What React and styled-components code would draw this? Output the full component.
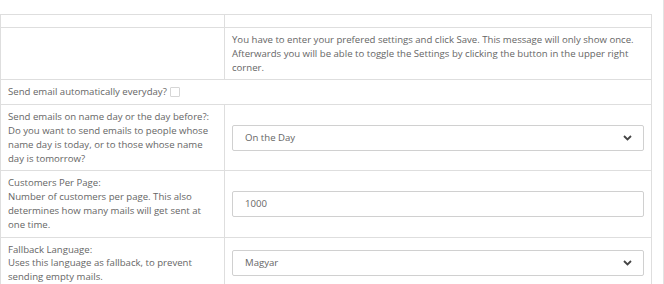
import React from 'react';
import styled, { createGlobalStyle } from 'styled-components';

const GlobalStyle = createGlobalStyle`
    html, body {
        margin: 0;
        padding: 0;
        background: #fff;
    }
    body {
        font-family: "Open Sans", "Liberation Sans", sans-serif;
        font-size: 9.6px;
        color: #666;
    }
`;

const Page = styled.div`
    width: 664px;
    height: 284px;
    box-sizing: border-box;
    padding: 14px 12px 0 0;
    border-right: 1px solid #e3e3e3;
    overflow: hidden;
`;

const SettingsTable = styled.table`
    width: 652px;
    border-collapse: collapse;
    table-layout: fixed;
`;

const Row = styled.tr`
    height: ${p => (p.$height ? `${p.$height}px` : 'auto')};
`;

const Cell = styled.td`
    border: 1px solid #dedede;
    padding: ${p => (p.$empty ? '0' : '5px 7px')};
    line-height: 13.8px;
    vertical-align: middle;
    width: ${p => (p.$width ? `${p.$width}px` : 'auto')};
    box-sizing: border-box;
`;

const Label = styled.span`
    display: block;
`;

const Checkbox = styled.span`
    display: inline-block;
    width: 8px;
    height: 8px;
    border: 1px solid #d6d6d6;
    border-radius: 1px;
    vertical-align: middle;
    margin: -1px 0 0 1px;
`;

const Field = styled.div`
    height: 26px;
    box-sizing: border-box;
    border: 1px solid #d0d0d0;
    border-radius: 2px;
    padding: 0 12px;
    display: flex;
    align-items: center;
    justify-content: space-between;
    color: #666;
    background: #fff;
`;

const Chevron = () => (
    <svg width="9" height="6" viewBox="0 0 9 6" style={{ marginRight: -1 }}>
        <path d="M1 1 L4.5 4.5 L8 1" fill="none" stroke="#444" strokeWidth="1.8" />
    </svg>
);

const Select = ({ value }) => (
    <Field>
        <span>{value}</span>
        <Chevron />
    </Field>
);

const App = () => (
    <>
        <GlobalStyle />
        <Page>
            <SettingsTable>
                <tbody>
                    <Row $height={13}>
                        <Cell $width={224} $empty />
                        <Cell $empty />
                    </Row>
                    <Row>
                        <Cell />
                        <Cell>
                            You have to enter your prefered settings and click Save. This message will only show once.
                            Afterwards you will be able to toggle the Settings by clicking the button in the upper right corner.
                        </Cell>
                    </Row>
                    <Row>
                        <Cell colSpan={2}>
                            Send email automatically everyday? <Checkbox />
                        </Cell>
                    </Row>
                    <Row>
                        <Cell>
                            <Label>Send emails on name day or the day before?:</Label>
                            Do you want to send emails to people whose name day is today, or to those whose name day is tomorrow?
                        </Cell>
                        <Cell>
                            <Select value="On the Day" />
                        </Cell>
                    </Row>
                    <Row>
                        <Cell>
                            <Label>Customers Per Page:</Label>
                            Number of customers per page. This also determines how many mails will get sent at one time.
                        </Cell>
                        <Cell>
                            <Field>1000</Field>
                        </Cell>
                    </Row>
                    <Row>
                        <Cell>
                            <Label>Fallback Language:</Label>
                            Uses this language as fallback, to prevent sending empty mails.
                        </Cell>
                        <Cell>
                            <Select value="Magyar" />
                        </Cell>
                    </Row>
                </tbody>
            </SettingsTable>
        </Page>
    </>
);

export default App;
